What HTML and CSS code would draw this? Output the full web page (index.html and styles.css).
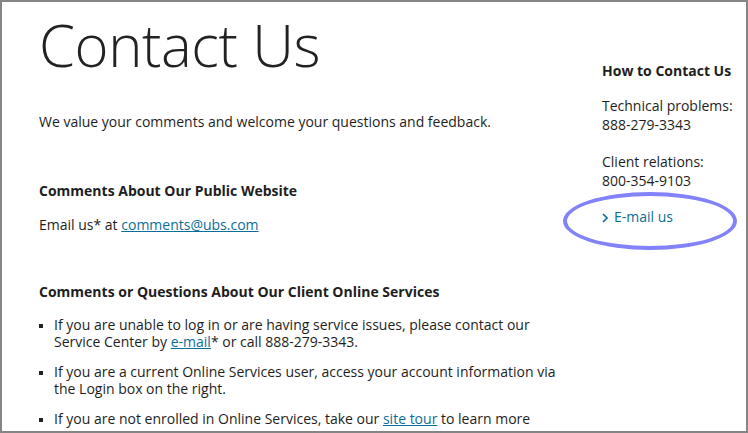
FILE: index.html
```html
<!DOCTYPE html>
<html lang="en">
<head>
    <meta charset="UTF-8">
    <title>Contact Us</title>
    <link rel="stylesheet" href="styles.css">
</head>
<body>
    <div class="frame">
        <main class="content">
            <h1>Contact Us</h1>
            <p class="intro">We value your comments and welcome your questions and feedback.</p>

            <h2>Comments About Our Public Website</h2>
            <p>Email us* at <a href="#">comments@ubs.com</a></p>

            <h2 class="second">Comments or Questions About Our Client Online Services</h2>
            <ul class="bullets">
                <li>If you are unable to log in or are having service issues, please contact our Service Center by <a href="#">e-mail</a>* or call 888-279-3343.</li>
                <li>If you are a current Online Services user, access your account information via the Login box on the right.</li>
                <li>If you are not enrolled in Online Services, take our <a href="#">site tour</a> to learn more</li>
            </ul>
        </main>

        <aside class="sidebar">
            <h3>How to Contact Us</h3>
            <p>Technical problems:<br>888-279-3343</p>
            <p>Client relations:<br>800-354-9103</p>
            <div class="email-link">
                <a href="#"><svg class="chev" width="6" height="10" viewBox="0 0 6 10"><path d="M1 1 L5 5 L1 9" fill="none" stroke="currentColor" stroke-width="1.6"/></svg>E-mail us</a>
                <div class="circle"></div>
            </div>
        </aside>
    </div>
</body>
</html>
```

FILE: styles.css
```css
html, body {
    margin: 0;
    padding: 0;
    height: 100%;
    overflow: hidden;
}
body {
    font-family: "Open Sans", "Noto Sans", sans-serif;
    font-size: 14px;
    line-height: 17px;
    color: #1e1e1e;
    background-color: #fff;
}
.frame {
    box-sizing: border-box;
    height: 433px;
    border: 2px solid #858585;
    display: flex;
    overflow: hidden;
}
.content {
    width: 524px;
    padding-left: 37px;
    flex: none;
}
.sidebar {
    padding-left: 39px;
    width: 140px;
    padding-top: 60px;
}
h1 {
    font-weight: 300;
    font-size: 58px;
    line-height: 70px;
    margin: 8px 0 0 0;
    letter-spacing: -0.4px;
    color: #222;
}
p { margin: 0; }
.intro { margin-top: 33px; }
h2 {
    font-size: 14px;
    font-weight: bold;
    margin: 52px 0 17px;
}
h2.second { margin-top: 50px; margin-bottom: 16px; }
a { color: #0b6e9a; }
.bullets {
    list-style: none;
    margin: 0;
    padding: 0;
}
.bullets li {
    position: relative;
    padding-left: 15px;
    margin-bottom: 13px;
}
.bullets li::before {
    content: "";
    position: absolute;
    left: 0;
    top: 8px;
    width: 4px;
    height: 4px;
    background-color: #222;
}
.sidebar h3 {
    font-size: 14px;
    font-weight: bold;
    margin: 0 0 17px;
}
.sidebar p { margin-bottom: 18px; line-height: 19px; }
.email-link {
    position: relative;
}
.email-link a {
    text-decoration: none;
}
.chev {
    margin-right: 6px;
    vertical-align: -1px;
}
.circle {
    position: absolute;
    left: -39px;
    top: -16px;
    width: 166px;
    height: 50px;
    border: 4px solid #8282fa;
    border-radius: 50%;
}
```
